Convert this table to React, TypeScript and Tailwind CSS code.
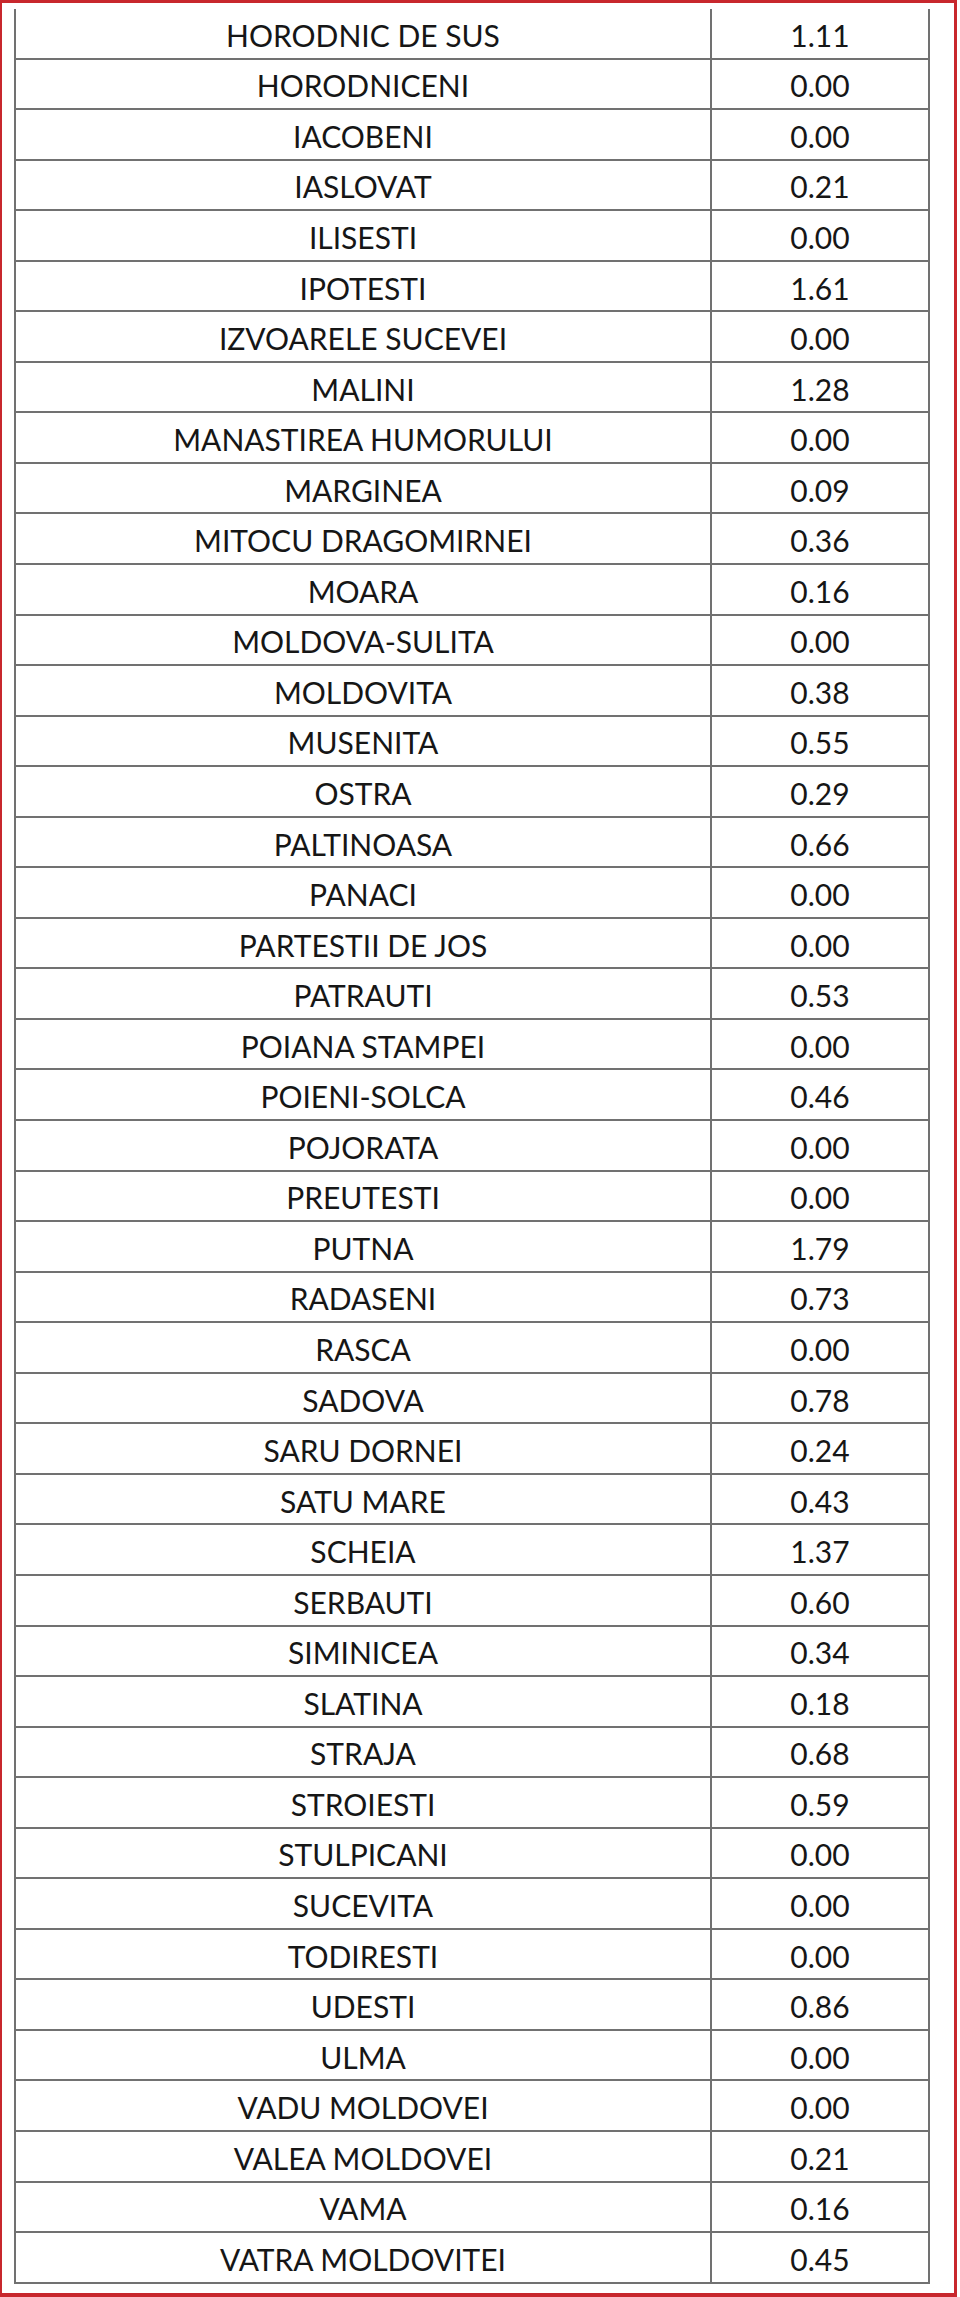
import React from "react";

const rows: [string, string][] = [
  ["HORODNIC DE SUS", "1.11"],
  ["HORODNICENI", "0.00"],
  ["IACOBENI", "0.00"],
  ["IASLOVAT", "0.21"],
  ["ILISESTI", "0.00"],
  ["IPOTESTI", "1.61"],
  ["IZVOARELE SUCEVEI", "0.00"],
  ["MALINI", "1.28"],
  ["MANASTIREA HUMORULUI", "0.00"],
  ["MARGINEA", "0.09"],
  ["MITOCU DRAGOMIRNEI", "0.36"],
  ["MOARA", "0.16"],
  ["MOLDOVA-SULITA", "0.00"],
  ["MOLDOVITA", "0.38"],
  ["MUSENITA", "0.55"],
  ["OSTRA", "0.29"],
  ["PALTINOASA", "0.66"],
  ["PANACI", "0.00"],
  ["PARTESTII DE JOS", "0.00"],
  ["PATRAUTI", "0.53"],
  ["POIANA STAMPEI", "0.00"],
  ["POIENI-SOLCA", "0.46"],
  ["POJORATA", "0.00"],
  ["PREUTESTI", "0.00"],
  ["PUTNA", "1.79"],
  ["RADASENI", "0.73"],
  ["RASCA", "0.00"],
  ["SADOVA", "0.78"],
  ["SARU DORNEI", "0.24"],
  ["SATU MARE", "0.43"],
  ["SCHEIA", "1.37"],
  ["SERBAUTI", "0.60"],
  ["SIMINICEA", "0.34"],
  ["SLATINA", "0.18"],
  ["STRAJA", "0.68"],
  ["STROIESTI", "0.59"],
  ["STULPICANI", "0.00"],
  ["SUCEVITA", "0.00"],
  ["TODIRESTI", "0.00"],
  ["UDESTI", "0.86"],
  ["ULMA", "0.00"],
  ["VADU MOLDOVEI", "0.00"],
  ["VALEA MOLDOVEI", "0.21"],
  ["VAMA", "0.16"],
  ["VATRA MOLDOVITEI", "0.45"],
];

export default function App() {
  return (
    <div className="w-[960px] h-[2297px] bg-white">
      <div className="w-[957px] h-[2297px] border-t-[3px] border-l-[2px] border-r-[3px] border-b-[4px] border-[#c8272d] pt-[6px] pl-[12px] font-['Lato',sans-serif] text-[30px] text-[#161616]">
        <div className="w-[916px] border-l-2 border-r-2 border-[#717171]">
          {rows.map(([name, value]) => (
            <div
              key={name}
              className="flex h-[50.55px] border-b-2 border-[#717171]"
            >
              <div className="w-[696px] border-r-2 border-[#717171] flex items-center justify-center leading-none pt-[3px]">
                {name}
              </div>
              <div className="flex-1 flex items-center justify-center leading-none pt-[3px]">
                {value}
              </div>
            </div>
          ))}
        </div>
      </div>
    </div>
  );
}
